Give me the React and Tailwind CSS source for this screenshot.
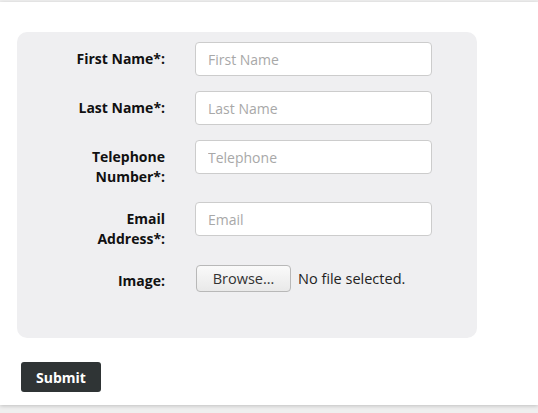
import React from "react";

const font = { fontFamily: '"Open Sans", "Noto Sans", sans-serif' };

function Row({ label, children }) {
  return (
    <div className="flex items-start">
      <label className="w-[148px] shrink-0 pt-[7px] text-right text-[14px] leading-[20px] font-bold text-[#111]">
        {label}
      </label>
      <div className="ml-[30px]">{children}</div>
    </div>
  );
}

function TextInput({ placeholder }) {
  return (
    <input
      type="text"
      placeholder={placeholder}
      className="block h-[34px] w-[237px] rounded-[4px] border border-[#cccccc] bg-white pl-[12px] text-[14px] text-[#333] placeholder:text-[#a8a8a8] outline-none"
      style={font}
    />
  );
}

export default function App() {
  return (
    <div className="min-h-screen bg-[#efefef] pt-[2px]" style={font}>
      <div className="h-[403px] bg-white shadow-[0_1px_4px_rgba(0,0,0,0.2)]">
        <div className="pt-[30px] pl-[17px]">
          <form className="flex w-[460px] flex-col gap-[15px] rounded-[10px] bg-[#efeff1] pt-[10px] pb-[46px]">
            <Row label="First Name*:">
              <TextInput placeholder="First Name" />
            </Row>
            <Row label="Last Name*:">
              <TextInput placeholder="Last Name" />
            </Row>
            <Row label={<>Telephone<br />Number*:</>}>
              <TextInput placeholder="Telephone" />
            </Row>
            <Row label={<>Email<br />Address*:</>}>
              <TextInput placeholder="Email" />
            </Row>
            <Row label="Image:">
              <div className="mt-[1px] flex items-center">
                <button
                  type="button"
                  className="h-[27px] w-[95px] ml-[1px] rounded-[4px] border border-[#b8b8b8] bg-gradient-to-b from-[#fafafa] to-[#e9e9e9] text-[14.5px] text-[#333]"
                >
                  Browse…
                </button>
                <span className="ml-[7px] text-[14.5px] text-[#222]">No file selected.</span>
              </div>
            </Row>
          </form>
        </div>
        <div className="mt-[24px] ml-[21px]">
          <button
            type="button"
            className="h-[30px] w-[80px] rounded-[3px] bg-[#2f3435] text-[14px] font-bold text-white"
          >
            Submit
          </button>
        </div>
      </div>
    </div>
  );
}
